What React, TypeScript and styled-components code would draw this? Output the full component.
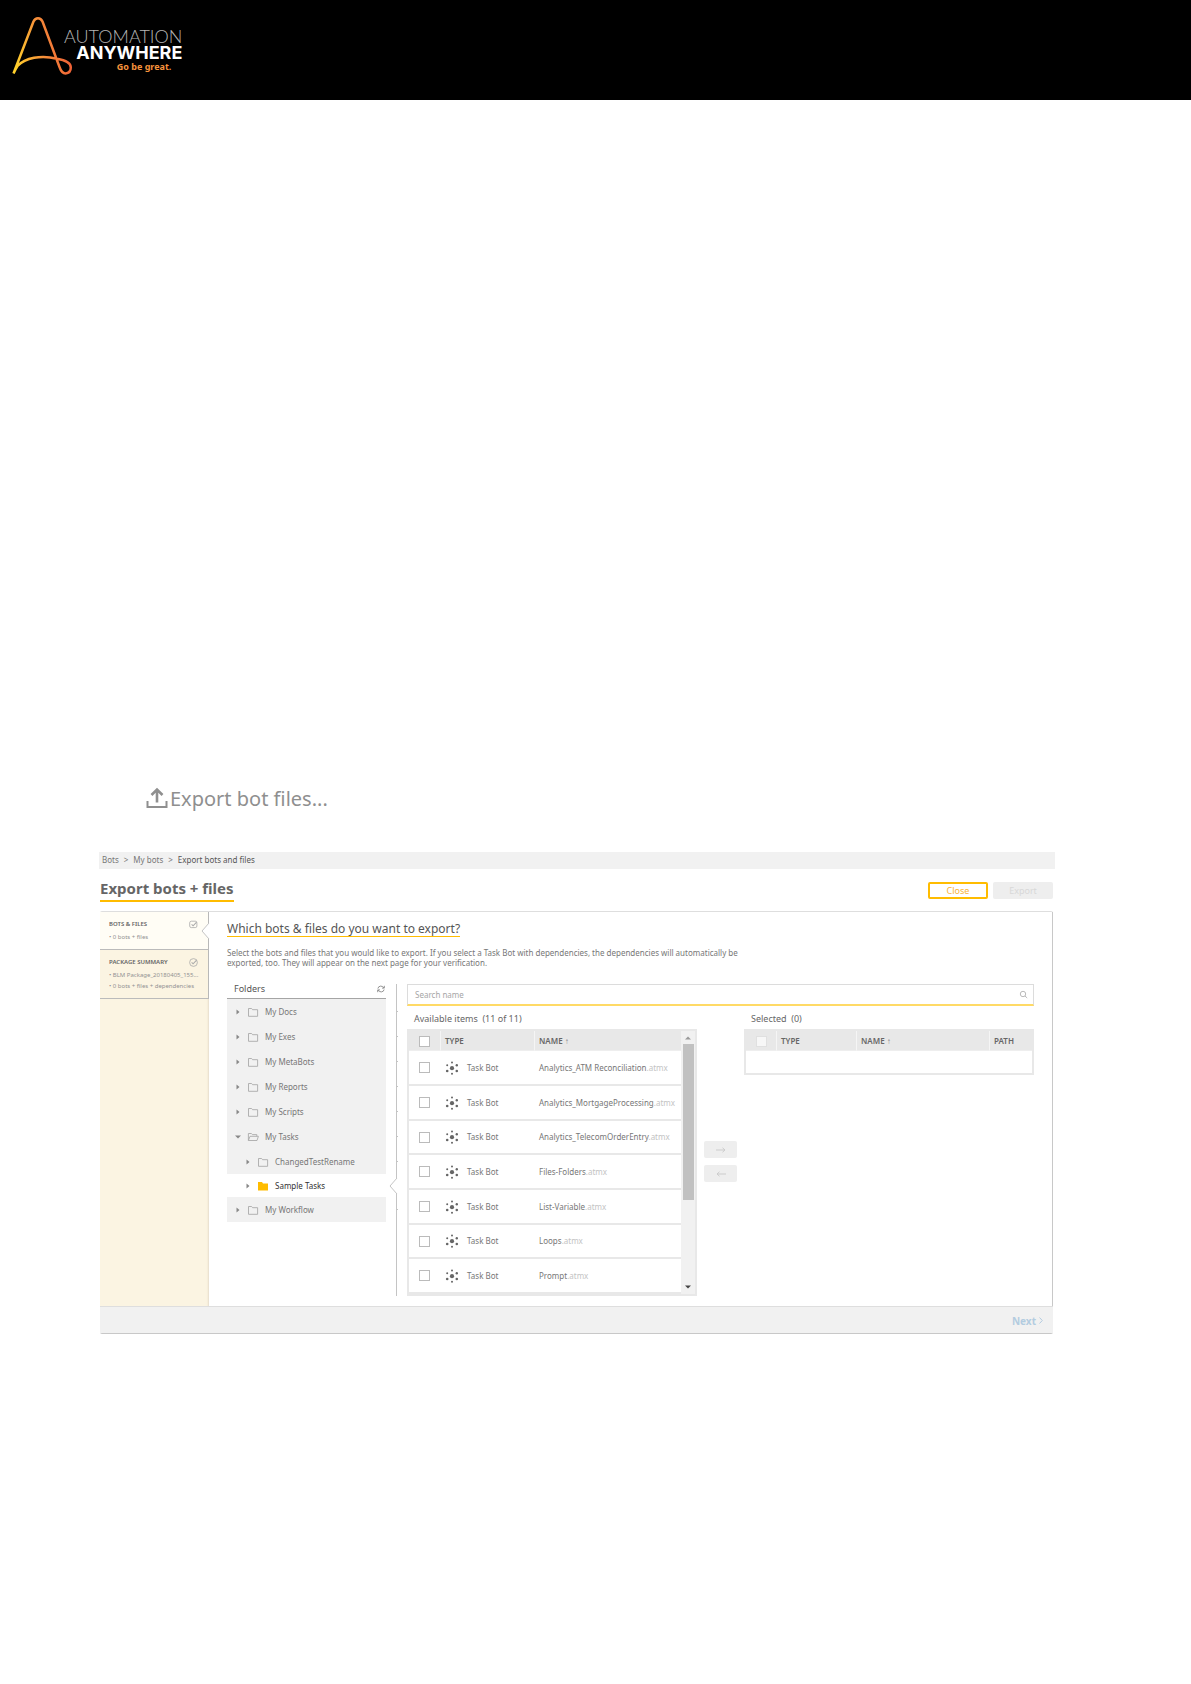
import React from "react";
import styled, { createGlobalStyle, css } from "styled-components";

const Global = createGlobalStyle`
  *, *::before, *::after { box-sizing: border-box; }
  body { margin: 0; background: #fff; }
  body, button, input, table { font-family: "Noto Sans", "Open Sans", sans-serif; }
  h1, h2, h3, p, ul, ol { margin: 0; padding: 0; }
  ul, ol { list-style: none; }
  button { margin: 0; padding: 0; border: 0; background: none; }
`;

const TopBar = styled.header`
  display: flex;
  align-items: flex-start;
  height: 100px;
  padding: 16px 12px;
  background: #000;
`;

const LogoMark = styled.svg`
  flex: none;
  width: 61px;
  height: 60px;
`;

const Wordmark = styled.div`
  display: flex;
  flex-direction: column;
  align-items: flex-end;
  margin: 12px 0 0 -9px;
  font-family: Lato, "Noto Sans", sans-serif;
  color: #fff;
  white-space: nowrap;
`;

const WordThin = styled.span`
  font-size: 18px;
  line-height: 17px;
  font-weight: 300;
  color: #b4b4b4;
`;

const WordBold = styled.span`
  font-family: Inter, Lato, sans-serif;
  font-size: 18px;
  line-height: 15px;
  font-weight: 700;
`;

const Tagline = styled.span`
  margin-right: 11px;
  font-family: "Noto Sans", sans-serif;
  font-size: 9px;
  line-height: 13px;
  font-weight: 700;
  color: #f7933c;
`;

const Page = styled.main`
  padding: 682px 136px 0 99px;
`;

const MenuButton = styled.button`
  display: flex;
  align-items: center;
  gap: 2px;
  height: 32px;
  margin-left: 47px;
  font-size: 20px;
  color: #8f8f8f;
  svg { width: 22px; height: 22px; }
`;

const Breadcrumb = styled.nav`
  margin-top: 38px;
  background: #f1f1f1;
  ol { display: flex; gap: 5px; padding: 0 0 2px 3px; height: 17px; align-items: center; }
  li, a { font-size: 8px; line-height: 15px; color: #777; text-decoration: none; }
  li[aria-current] { color: #555; }
`;

const TitleRow = styled.div`
  display: flex;
  justify-content: space-between;
  align-items: flex-start;
  padding: 9px 2px 0 1px;
`;

const Title = styled.h1`
  padding-bottom: 2px;
  border-bottom: 2px solid #ffbc00;
  font-size: 15px;
  line-height: 20px;
  font-weight: 700;
  color: #666;
`;

const Actions = styled.div`
  display: flex;
  gap: 5px;
  padding-top: 4px;
`;

const ActionButton = styled.button<{ $primary?: boolean }>`
  width: 60px;
  height: 17px;
  border-radius: 2px;
  font-size: 9px;
  line-height: 13px;
  ${(p) =>
    p.$primary
      ? css`border: 2px solid #ffbc00; color: #f9b233; background: #fff;`
      : css`color: #d8d8d8; background: #eee;`}
`;

const Panel = styled.section`
  margin: 9px 2px 0 1px;
  border-top: 1px solid #dedede;
  border-bottom: 1px solid #c8c8c8;
  border-radius: 2px;
`;

const PanelBody = styled.div`
  display: flex;
  border-right: 1px solid #c8c8c8;
`;

const Steps = styled.ol`
  flex: none;
  width: 109px;
  background: #fbf4e2;
  box-shadow: inset -3px 0 2px -2px #e6dccb;
`;

const Step = styled.li<{ $current?: boolean }>`
  position: relative;
  padding: 7px 10px 6px 9px;
  border-right: 1px solid #b8b8b8;
  border-bottom: 1px solid #bbb;
  background: ${(p) => (p.$current ? "#fffdf5" : "#fbf4e2")};
`;

const StepHead = styled.div`
  display: flex;
  justify-content: space-between;
  align-items: center;
  height: 10px;
  margin-bottom: 3px;
  svg { width: 9px; height: 9px; }
`;

const StepTitle = styled.h3`
  font-size: 6px;
  line-height: 10px;
  font-weight: 600;
  color: #666;
`;

const StepLine = styled.p`
  margin-right: -6px;
  overflow: hidden;
  font-size: 6px;
  line-height: 11px;
  color: #929292;
  white-space: nowrap;
`;

const Notch = styled.svg`
  position: absolute;
  top: 50%;
  right: -2px;
  width: 9px;
  height: 16px;
  margin-top: -8px;
`;

const Content = styled.div`
  flex: 1;
  min-width: 0;
  padding: 9px 18px 10px;
`;

const Question = styled.h2`
  width: fit-content;
  border-bottom: 1px solid #ffbc00;
  font-size: 12px;
  line-height: 15px;
  font-weight: 400;
  color: #555;
`;

const Intro = styled.p`
  max-width: 516px;
  margin-top: 11px;
  font-size: 8px;
  line-height: 10px;
  color: #777;
`;

const Workspace = styled.div`
  display: flex;
  margin-top: 16px;
`;

const Folders = styled.div`
  flex: none;
  width: 170px;
  border-right: 1px solid #c4c4c4;
`;

const FoldersHead = styled.div`
  display: flex;
  align-items: center;
  justify-content: space-between;
  width: 159px;
  height: 15px;
  padding: 0 1px 4px 7px;
  border-bottom: 1px solid #a5a5a5;
  color: #555;
  h3 { font-size: 9px; line-height: 10px; font-weight: 400; }
  svg { display: block; width: 8px; height: 8px; }
`;

const FolderRow = styled.li<{ $nested?: boolean; $selected?: boolean }>`
  position: relative;
  display: flex;
  align-items: center;
  width: 159px;
  height: ${(p) => (p.$selected ? 23 : 25)}px;
  padding-left: ${(p) => (p.$nested ? 18 : 8)}px;
  background: ${(p) => (p.$selected ? "#fff" : "#f1f1f1")};
  font-size: 8px;
  color: ${(p) => (p.$selected ? "#333" : "#777")};
  &::after {
    content: "";
    position: absolute;
    top: 12px;
    right: -12px;
    width: 2px;
    height: 1px;
    background: ${(p) => (p.$selected ? "transparent" : "#c4c4c4")};
  }
  ${Notch} { right: -12px; }
`;

const Arrow = styled.svg`
  width: 6px;
  height: 6px;
`;

const FolderIcon = styled.svg`
  width: 12px;
  height: 10px;
  margin: 0 6px;
`;

const Picker = styled.div`
  flex: 1;
  min-width: 0;
  margin-left: 10px;
`;

const SearchBox = styled.label`
  display: flex;
  align-items: center;
  height: 22px;
  padding: 0 5px 0 7px;
  border: 1px solid #dcdcdc;
  border-bottom: 2px solid #ffda66;
  input {
    flex: 1;
    min-width: 0;
    padding: 0;
    border: 0;
    outline: 0;
    background: transparent;
    font-size: 8px;
    line-height: 12px;
    color: #777;
  }
  input::placeholder { color: #a6a6a6; opacity: 1; }
  svg { width: 9px; height: 9px; }
`;

const Transfer = styled.div`
  display: grid;
  grid-template-columns: 1fr 33px 1fr;
  column-gap: 7px;
  align-items: start;
`;

const ListTitle = styled.h3`
  padding: 7px 0 4px 7px;
  font-size: 9px;
  line-height: 12px;
  font-weight: 400;
  color: #666;
  white-space: pre;
`;

const ListFrame = styled.div`
  display: flex;
  border: 2px solid #e8e8e8;
`;

const ScrollArea = styled.div`
  flex: 1;
  min-width: 0;
  height: 263px;
  overflow: hidden;
`;

const Table = styled.table`
  width: 100%;
  table-layout: fixed;
  border-collapse: separate;
  border-spacing: 0;
  th {
    height: 20px;
    padding: 1px 0 0 4px;
    border-bottom: 1px solid #eee;
    border-left: 1px solid #f5f5f5;
    background: #e8e8e8;
    font-size: 8px;
    line-height: 10px;
    font-weight: 600;
    text-align: left;
    color: #666;
  }
  th:first-child, td:first-child { padding-left: 10px; border-left: 0; }
  td {
    height: 35px;
    padding: 0 0 0 5px;
    border-bottom: 2px solid #e8e8e8;
    font-size: 8px;
    line-height: 10px;
    color: #777;
    white-space: nowrap;
  }
  tr:nth-child(3n) td { height: 34px; }
`;

const EmptyTable = styled(Table)`
  td { height: 22px; border: 0; }
`;

const Col = styled.col<{ $w: number }>`
  width: ${(p) => p.$w}px;
`;

const Check = styled.input`
  display: block;
  appearance: none;
  width: 11px;
  height: 11px;
  margin: 0;
  border: 1px solid #bbb;
  background: #fff;
  &:disabled { border-color: #e0e0e0; background: #f7f7f7; }
`;

const BotType = styled.span`
  display: flex;
  align-items: center;
  gap: 8px;
  svg { width: 14px; height: 14px; }
`;

const Ext = styled.span`
  color: #c3c3c3;
`;

const SortMark = styled.span`
  color: #888;
`;

const ScrollBar = styled.div`
  display: flex;
  flex-direction: column;
  align-items: center;
  justify-content: space-between;
  flex: none;
  width: 14px;
  height: 263px;
  background: #f1f1f1;
  svg { flex: none; width: 8px; height: 13px; }
`;

const ScrollTrack = styled.div`
  flex: 1;
  width: 11px;
`;

const ScrollThumb = styled.div`
  height: 156px;
  background: #c1c1c1;
`;

const MoveButtons = styled.div`
  display: flex;
  flex-direction: column;
  gap: 7px;
  padding-top: 135px;
`;

const MoveButton = styled.button`
  height: 17px;
  border-radius: 2px;
  background: #eee;
  svg { display: block; width: 10px; height: 6px; margin: 0 auto; }
`;

const Footer = styled.footer`
  display: flex;
  justify-content: flex-end;
  align-items: center;
  height: 27px;
  padding: 1px 10px 0 0;
  border-top: 1px solid #dedede;
  background: #f1f1f1;
`;

const NextButton = styled.button`
  display: flex;
  align-items: center;
  gap: 3px;
  font-size: 10px;
  line-height: 14px;
  font-weight: 700;
  color: #b3cce0;
  svg { width: 4px; height: 7px; }
`;

const NotchShape = ({ fill }: { fill: string }) => (
  <Notch viewBox="0 0 9 16" aria-hidden="true">
    <path d="M8 0 L1 8 L8 16 H9 V0 Z" fill={fill} />
    <path d="M8 0 L1 8 L8 16" fill="none" stroke="#c4c4c4" />
  </Notch>
);

const StepMark = ({ round }: { round?: boolean }) => (
  <svg viewBox="0 0 9 9" fill="none" stroke="#aaa" strokeWidth=".8" aria-hidden="true">
    {round ? <circle cx="4.5" cy="4.5" r="3.9" /> : <rect x=".7" y="1.2" width="7.2" height="6.4" rx="1.6" />}
    <path d="M2.6 4.4 L4.1 5.8 L7.6 2.2" strokeWidth="1.1" />
  </svg>
);

type FolderKind = "closed" | "open" | "filled";

const FolderGlyph = ({ kind }: { kind: FolderKind }) => (
  <FolderIcon viewBox="0 0 12 10" aria-hidden="true">
    {kind === "closed" && (
      <path d="M1.5 9.3 V1.5 H4.6 L5.6 2.7 H10.6 V9.3 Z" fill="none" stroke="#aaa" strokeWidth=".9" />
    )}
    {kind === "filled" && <path d="M1 9.5 V1 H5 L6 2.4 H11 V9.5 Z" fill="#ffbc00" />}
    {kind === "open" && (
      <path
        d="M1.4 8.5 V1.5 H4.4 L5.4 2.6 H9.8 V4.3 M1.4 8.5 L3 4.3 H11.4 L10 8.5 Z"
        fill="none"
        stroke="#aaa"
        strokeWidth=".9"
      />
    )}
  </FolderIcon>
);

const BotIcon = () => (
  <svg viewBox="0 0 14 14" fill="#666" aria-hidden="true">
    <circle cx="7" cy="7.2" r="2.1" />
    <circle cx="7" cy="1.6" r="1" />
    <circle cx="7" cy="12.7" r="1" />
    <circle cx="2.2" cy="4.2" r="1" />
    <circle cx="11.8" cy="4.2" r="1.2" />
    <circle cx="2.2" cy="10" r="1.3" />
    <circle cx="11.8" cy="10" r="1.3" />
  </svg>
);

const folders: { name: string; kind?: FolderKind; nested?: boolean; selected?: boolean }[] = [
  { name: "My Docs" },
  { name: "My Exes" },
  { name: "My MetaBots" },
  { name: "My Reports" },
  { name: "My Scripts" },
  { name: "My Tasks", kind: "open" },
  { name: "ChangedTestRename", nested: true },
  { name: "Sample Tasks", kind: "filled", nested: true, selected: true },
  { name: "My Workflow" },
];

const bots = [
  "Analytics_ATM Reconciliation",
  "Analytics_MortgageProcessing",
  "Analytics_TelecomOrderEntry",
  "Files-Folders",
  "List-Variable",
  "Loops",
  "Prompt",
];

export default function App() {
  return (
    <>
      <Global />
      <TopBar>
        <LogoMark viewBox="0 0 61 60" aria-hidden="true">
          <defs>
            <linearGradient id="flame" x1="0" y1=".7" x2="1" y2=".5">
              <stop offset="0" stopColor="#ffd02b" />
              <stop offset=".5" stopColor="#f6903a" />
              <stop offset="1" stopColor="#ee5a35" />
            </linearGradient>
          </defs>
          <path
            d="M1.5 57.5 L21.5 5.5 Q23 2.2 26 2.2 Q29 2.2 30.5 5.5 L47.5 51 Q49.8 57.5 53.5 57.5 Q58.8 57 58.8 51.5 C58.8 46 51 43.8 45 42.8 C29 38.5 13 42 5.5 50 Q3.5 53 1.5 57.5"
            fill="none"
            stroke="url(#flame)"
            strokeWidth="2.5"
            strokeLinejoin="round"
          />
        </LogoMark>
        <Wordmark>
          <WordThin>AUTOMATION</WordThin>
          <WordBold>ANYWHERE</WordBold>
          <Tagline>Go be great.</Tagline>
        </Wordmark>
      </TopBar>
      <Page>
        <MenuButton type="button">
          <svg viewBox="0 0 22 22" fill="none" stroke="currentColor" strokeWidth="2" aria-hidden="true">
            <path d="M1.5 14 V20 H20.5 V14" />
            <path d="M11 15.5 V3 M5.5 8 L11 2.5 L16.5 8" strokeWidth="2.6" />
          </svg>
          Export bot files...
        </MenuButton>
        <Breadcrumb aria-label="Breadcrumb">
          <ol>
            <li><a href="#bots">Bots</a></li>
            <li aria-hidden="true">&gt;</li>
            <li><a href="#my-bots">My bots</a></li>
            <li aria-hidden="true">&gt;</li>
            <li aria-current="page">Export bots and files</li>
          </ol>
        </Breadcrumb>
        <TitleRow>
          <Title>Export bots + files</Title>
          <Actions>
            <ActionButton type="button" $primary>Close</ActionButton>
            <ActionButton type="button" disabled>Export</ActionButton>
          </Actions>
        </TitleRow>
        <Panel>
          <PanelBody>
            <Steps>
              <Step $current>
                <StepHead>
                  <StepTitle>BOTS &amp; FILES</StepTitle>
                  <StepMark />
                </StepHead>
                <StepLine>• 0 bots + files</StepLine>
                <NotchShape fill="#fff" />
              </Step>
              <Step>
                <StepHead>
                  <StepTitle>PACKAGE SUMMARY</StepTitle>
                  <StepMark round />
                </StepHead>
                <StepLine>• BLM Package_20180405_155...</StepLine>
                <StepLine>• 0 bots + files + dependencies</StepLine>
              </Step>
            </Steps>
            <Content>
              <Question>Which bots &amp; files do you want to export?</Question>
              <Intro>
                Select the bots and files that you would like to export. If you select a Task Bot with dependencies, the
                dependencies will automatically be exported, too. They will appear on the next page for your
                verification.
              </Intro>
              <Workspace>
                <Folders>
                  <FoldersHead>
                    <h3>Folders</h3>
                    <button type="button" aria-label="Refresh folders">
                      <svg viewBox="0 0 8 8" fill="none" stroke="#888" strokeWidth=".9">
                        <path d="M.9 3.6 Q1.2 1.3 3.6 1.1 Q5.8 1 7 2.9 M7.3 .8 V3.1 H5 M7.1 4.5 Q6.8 6.7 4.4 6.9 Q2.2 7 1 5.1 M.7 7.2 V4.9 H3" />
                      </svg>
                    </button>
                  </FoldersHead>
                  <ul>
                    {folders.map((f) => (
                      <FolderRow key={f.name} $nested={f.nested} $selected={f.selected}>
                        <Arrow viewBox="0 0 6 6" fill="#888" aria-hidden="true">
                          <path d={f.kind === "open" ? "M0 1.5 H6 L3 4.5 Z" : "M1.5 0.5 L4.5 3 L1.5 5.5 Z"} />
                        </Arrow>
                        <FolderGlyph kind={f.kind ?? "closed"} />
                        {f.name}
                        {f.selected && <NotchShape fill="#fff" />}
                      </FolderRow>
                    ))}
                  </ul>
                </Folders>
                <Picker>
                  <SearchBox>
                    <input type="text" placeholder="Search name" aria-label="Search name" />
                    <svg viewBox="0 0 9 9" fill="none" stroke="#bbb" aria-hidden="true">
                      <circle cx="4" cy="4" r="2.7" />
                      <path d="M6 6 L8.2 8" />
                    </svg>
                  </SearchBox>
                  <Transfer>
                    <div>
                      <ListTitle>Available items  (11 of 11)</ListTitle>
                      <ListFrame>
                        <ScrollArea>
                          <Table>
                            <colgroup>
                              <Col $w={31} />
                              <Col $w={94} />
                              <col />
                            </colgroup>
                            <thead>
                              <tr>
                                <th><Check type="checkbox" aria-label="Select all available items" /></th>
                                <th>TYPE</th>
                                <th>NAME <SortMark>↑</SortMark></th>
                              </tr>
                            </thead>
                            <tbody>
                              {bots.map((name) => (
                                <tr key={name}>
                                  <td><Check type="checkbox" aria-label={`Select ${name}`} /></td>
                                  <td><BotType><BotIcon />Task Bot</BotType></td>
                                  <td>{name}<Ext>.atmx</Ext></td>
                                </tr>
                              ))}
                            </tbody>
                          </Table>
                        </ScrollArea>
                        <ScrollBar aria-hidden="true">
                          <svg viewBox="0 0 8 13"><path d="M1 8.5 L4 5.5 L7 8.5 Z" fill="#999" /></svg>
                          <ScrollTrack><ScrollThumb /></ScrollTrack>
                          <svg viewBox="0 0 8 13"><path d="M1 4.5 H7 L4 7.5 Z" fill="#444" /></svg>
                        </ScrollBar>
                      </ListFrame>
                    </div>
                    <MoveButtons>
                      <MoveButton type="button" aria-label="Add to selected" disabled>
                        <svg viewBox="0 0 10 6" fill="none" stroke="#ccc"><path d="M0 3 H9 M6.5 .8 L9 3 L6.5 5.2" /></svg>
                      </MoveButton>
                      <MoveButton type="button" aria-label="Remove from selected" disabled>
                        <svg viewBox="0 0 10 6" fill="none" stroke="#ccc"><path d="M10 3 H1 M3.5 .8 L1 3 L3.5 5.2" /></svg>
                      </MoveButton>
                    </MoveButtons>
                    <div>
                      <ListTitle>Selected  (0)</ListTitle>
                      <ListFrame>
                        <EmptyTable>
                          <colgroup>
                            <Col $w={30} />
                            <Col $w={80} />
                            <col />
                            <Col $w={43} />
                          </colgroup>
                          <thead>
                            <tr>
                              <th><Check type="checkbox" aria-label="Select all selected items" disabled /></th>
                              <th>TYPE</th>
                              <th>NAME <SortMark>↑</SortMark></th>
                              <th>PATH</th>
                            </tr>
                          </thead>
                          <tbody>
                            <tr><td colSpan={4} /></tr>
                          </tbody>
                        </EmptyTable>
                      </ListFrame>
                    </div>
                  </Transfer>
                </Picker>
              </Workspace>
            </Content>
          </PanelBody>
          <Footer>
            <NextButton type="button" disabled>
              Next
              <svg viewBox="0 0 4 7" fill="none" stroke="currentColor" aria-hidden="true"><path d="M.5 .5 L3.3 3.5 L.5 6.5" /></svg>
            </NextButton>
          </Footer>
        </Panel>
      </Page>
    </>
  );
}
